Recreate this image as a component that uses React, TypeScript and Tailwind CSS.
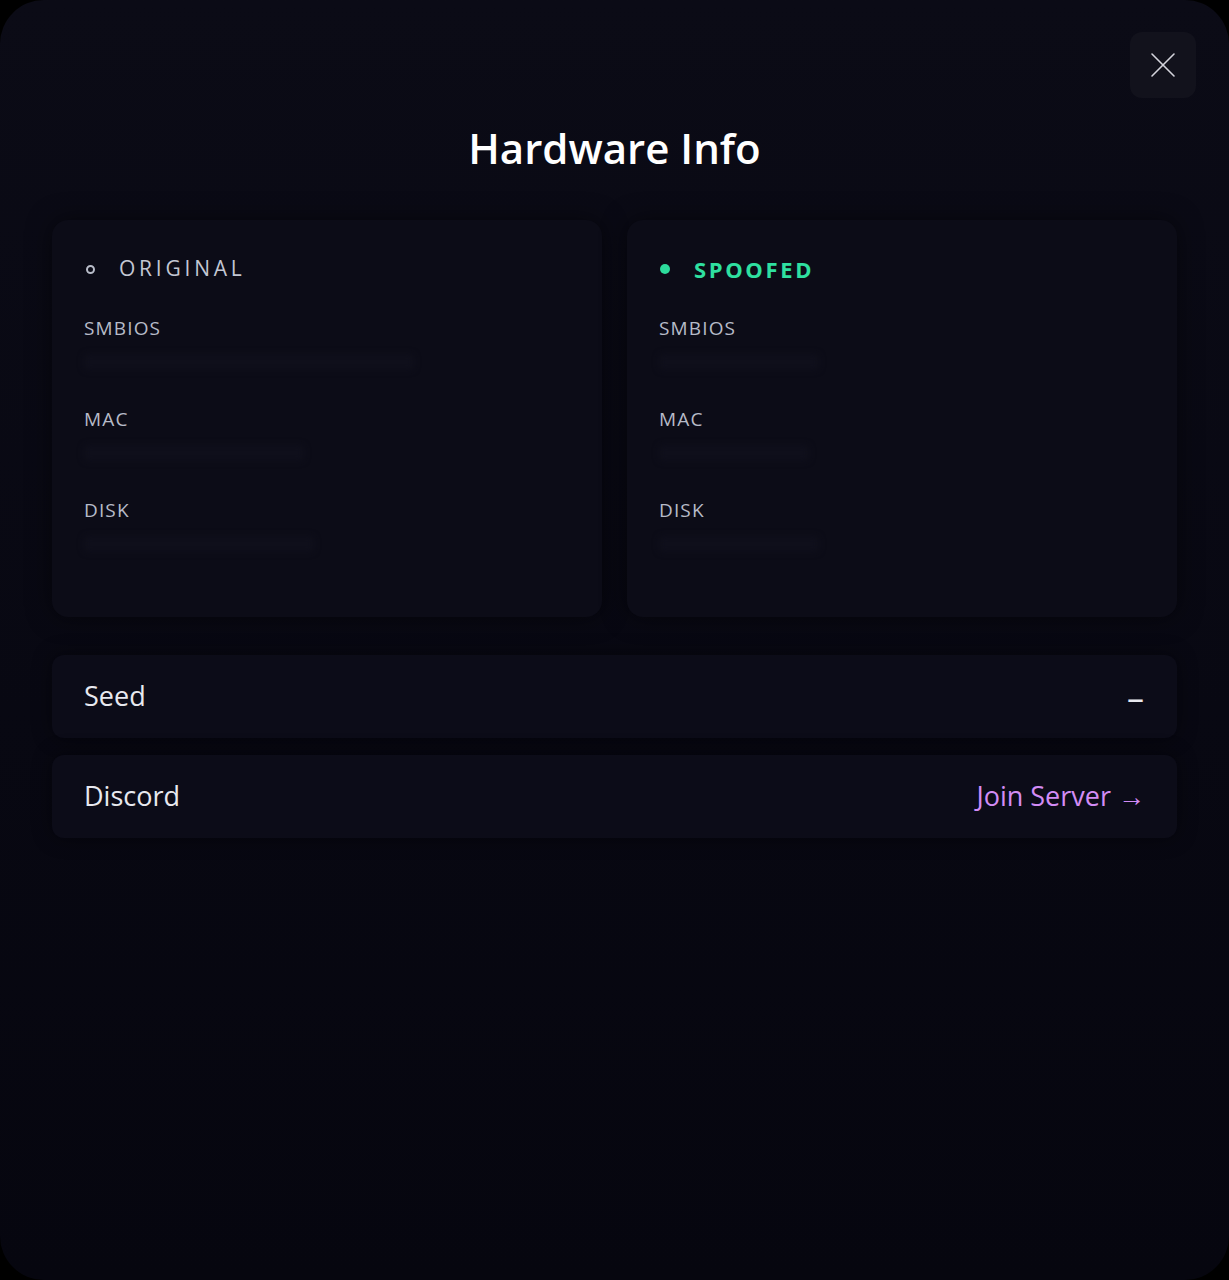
import React from 'react';

type Field = { label: string; width: number };

const fields: Field[] = [
  { label: 'SMBIOS', width: 330 },
  { label: 'MAC', width: 220 },
  { label: 'DISK', width: 230 },
];

const spoofedWidths = [160, 150, 160];

const CloseIcon: React.FC = () => (
  <svg width="28" height="28" viewBox="0 0 28 28" fill="none" stroke="#d4d4dc" strokeWidth="1.6" strokeLinecap="round">
    <path d="M3 3 L25 25" />
    <path d="M25 3 L3 25" />
  </svg>
);

const InfoCard: React.FC<{ spoofed?: boolean }> = ({ spoofed }) => (
  <div className="flex-1 rounded-2xl bg-[#0c0c17] shadow-[0_0_24px_rgba(0,0,0,0.5)] px-8 pt-[36px] pb-[65px]">
    <div className="flex items-center gap-[24px] h-[26px]">
      {spoofed ? (
        <span className="w-[10px] h-[10px] rounded-full bg-[#2ddc9c] ml-[1px]" />
      ) : (
        <span className="w-[9px] h-[9px] rounded-full border-2 border-[#b9bdc9] ml-[2px]" />
      )}
      <span
        className={
          spoofed
            ? 'text-[22px] font-bold tracking-[0.12em] text-[#2fe0a0]'
            : 'text-[21px] tracking-[0.18em] text-[#c3c7d3]'
        }
      >
        {spoofed ? 'SPOOFED' : 'ORIGINAL'}
      </span>
    </div>
    <div className="mt-[34px] flex flex-col gap-[37px]">
      {fields.map((f, i) => (
        <div key={f.label} className="flex flex-col">
          <span className="text-[19px] leading-[24px] tracking-[0.06em] text-[#b7bbc8]">{f.label}</span>
          <div
            className="mt-[14px] h-[16px] rounded-sm bg-[#0f0f1b] blur-[3px]"
            style={{ width: spoofed ? spoofedWidths[i] : f.width }}
          />
        </div>
      ))}
    </div>
  </div>
);

const Row: React.FC<{ label: string; children: React.ReactNode }> = ({ label, children }) => (
  <div className="flex items-center justify-between h-[83px] rounded-xl bg-[#0c0c18] px-8 shadow-[0_0_20px_rgba(0,0,0,0.45)]">
    <span className="text-[27px] text-[#e8e9ef]">{label}</span>
    {children}
  </div>
);

export default function App() {
  return (
    <div className="bg-black w-[1229px] h-[1280px]" style={{ fontFamily: '"Open Sans", "Noto Sans", sans-serif' }}>
      <div className="relative w-full h-full rounded-[44px] bg-gradient-to-b from-[#0b0b16] to-[#06060f] px-[52px] pt-[120px]">
        <button className="absolute top-[32px] right-[33px] w-[66px] h-[66px] rounded-xl bg-[#12121c] flex items-center justify-center">
          <CloseIcon />
        </button>
        <h1 className="text-center text-[42px] leading-[56px] font-semibold text-white">Hardware Info</h1>
        <div className="mt-[44px] flex gap-[25px]">
          <InfoCard />
          <InfoCard spoofed />
        </div>
        <div className="mt-[38px] flex flex-col gap-[17px]">
          <Row label="Seed">
            <span className="text-[34px] leading-none text-[#e8e9ef] pr-[1px]">–</span>
          </Row>
          <Row label="Discord">
            <span className="text-[27px] text-[#d38cf5]">Join Server →</span>
          </Row>
        </div>
      </div>
    </div>
  );
}
